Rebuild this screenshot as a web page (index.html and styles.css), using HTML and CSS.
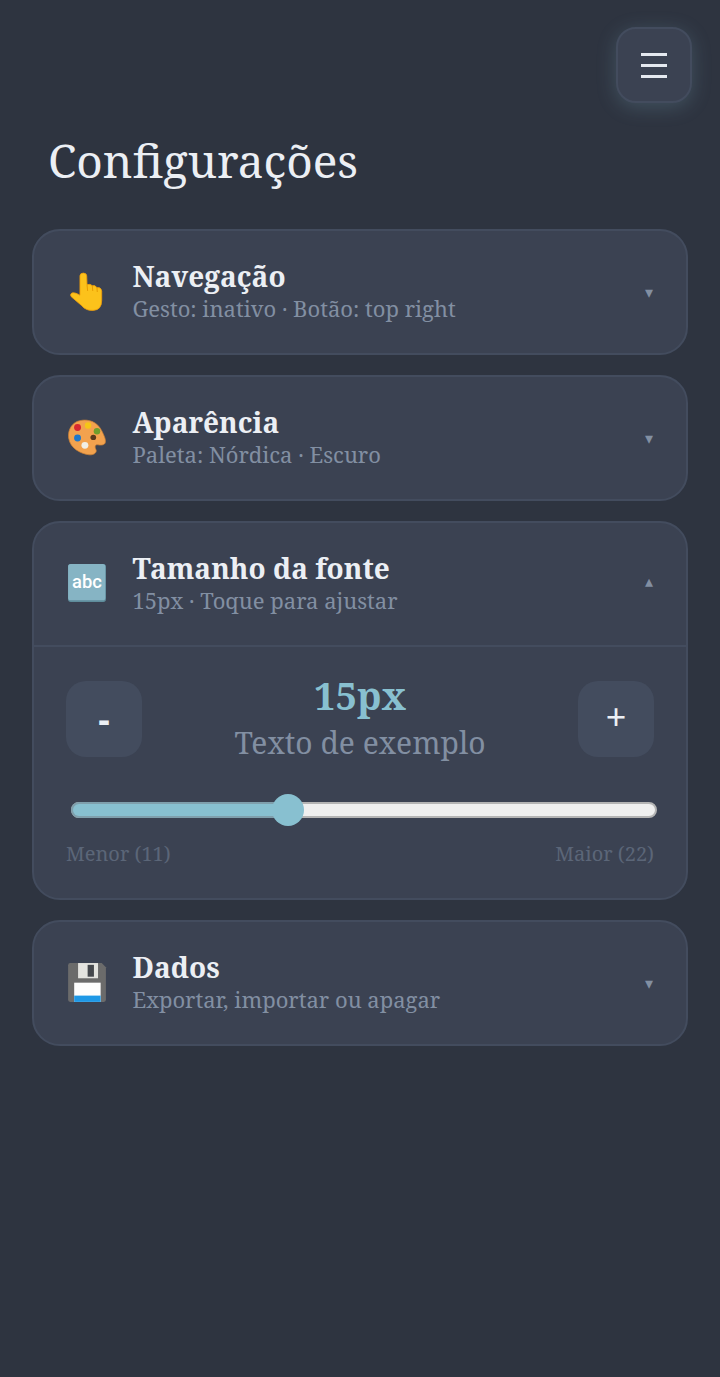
FILE: index.html
```html
<!DOCTYPE html>
<html lang="pt-BR">

<head>
  <meta charset="UTF-8">
  <meta name="viewport" content="width=device-width, initial-scale=1.0">
  <title>Configurações</title>
  <link rel="stylesheet" href="styles.css">
</head>

<body>

  <div class="topbar">
    <button class="menu-button" aria-label="Menu">
      <span class="menu-line"></span>
      <span class="menu-line"></span>
      <span class="menu-line"></span>
    </button>
  </div>

  <h1 class="page-title">Configurações</h1>

  <div class="card-list">

    <div class="card">
      <div class="card-header">
        <svg class="card-icon" viewBox="0 0 40 40">
          <path d="M13.300 4.500Q13.500 2 16.500 2Q19.500 2 19.700 4.500L20 13Q23 12 25 14Q28 13 29.500 16Q33 15 34 19L34 28Q34 37 26 37.500Q19 38 15 33L5 24.500Q3.500 22.500 5.500 21Q8 20 13.300 23Z" fill="#fcc21b" stroke="#ee9d0c" stroke-width="0.800"/>
          <path d="M20 13l.6 6M25 14l.5 5M29.500 16l.3 4" stroke="#e59900" stroke-width="0.900" fill="none"/>
        </svg>
        <div class="card-text">
          <h3>Navegação</h3>
          <p>Gesto: inativo · Botão: top right</p>
        </div>
        <span class="arrow">▾</span>
      </div>
    </div>

    <div class="card">
      <div class="card-header">
        <svg class="card-icon" viewBox="0 0 40 40">
          <path d="M13 3.500C22 1.500 30 5 34 13C36 17 38 21 37.500 24C37 27 33 27 30.500 26.500C28 26 27 28 28.500 31C30 34 26 36.500 22 36C14 35 4 30 2.500 20C1.500 12 6 5 13 3.500Z" fill="#f2a24e" stroke="#c97f35" stroke-width="0.700"/>
          <circle cx="11" cy="10" r="3.300" fill="#d7282f"/>
          <circle cx="21" cy="8" r="3.100" fill="#f5c518"/>
          <circle cx="29.500" cy="13.500" r="3.100" fill="#6f9f2c"/>
          <circle cx="11" cy="20" r="3.300" fill="#1f77c9"/>
          <ellipse cx="26" cy="19.500" rx="2.700" ry="2.500" fill="#5a3a1c"/>
          <circle cx="18" cy="27" r="3.300" fill="#f1efe6"/>
        </svg>
        <div class="card-text">
          <h3>Aparência</h3>
          <p>Paleta: Nórdica · Escuro</p>
        </div>
        <span class="arrow">▾</span>
      </div>
    </div>

    <div class="card">
      <div class="card-header card-header-open">
        <svg class="card-icon" viewBox="0 0 40 40">
          <rect x="2" y="2" width="36" height="36" rx="2.500" fill="#5f8d9c"/>
          <rect x="2" y="2" width="35.500" height="34.500" rx="2.500" fill="#86b4c4"/>
          <text x="20" y="24.500" class="abc-label">abc</text>
        </svg>
        <div class="card-text">
          <h3>Tamanho da fonte</h3>
          <p>15px · Toque para ajustar</p>
        </div>
        <span class="arrow arrow-open">▴</span>
      </div>
      <div class="card-body">
        <div class="size-row">
          <button class="step-button step-minus">-</button>
          <div class="size-preview">
            <div class="size-value">15px</div>
            <div class="size-sample">Texto de exemplo</div>
          </div>
          <button class="step-button step-plus">+</button>
        </div>
        <div class="slider">
          <div class="slider-fill" style="width: 37%"></div>
          <div class="slider-thumb"></div>
        </div>
        <div class="slider-labels">
          <span>Menor (11)</span>
          <span>Maior (22)</span>
        </div>
      </div>
    </div>

    <div class="card">
      <div class="card-header">
        <svg class="card-icon" viewBox="0 0 40 40">
          <path d="M4 1h30l4 4v31a2 2 0 0 1-2 2H4a2 2 0 0 1-2-2V3a2 2 0 0 1 2-2z" fill="#6b6b6b"/>
          <rect x="11.500" y="1" width="19" height="14.500" fill="#e4e4e0"/>
          <rect x="20.600" y="2.700" width="6" height="11.300" fill="#45484d"/>
          <rect x="7.800" y="19.700" width="25.200" height="18.300" fill="#fdfdfd"/>
          <rect x="7.800" y="32" width="25.200" height="6" fill="#1e98e6"/>
        </svg>
        <div class="card-text">
          <h3>Dados</h3>
          <p>Exportar, importar ou apagar</p>
        </div>
        <span class="arrow">▾</span>
      </div>
    </div>

  </div>

</body>

</html>
```

FILE: styles.css
```css
body {
  font-family: 'Noto Serif', 'DejaVu Serif', serif;
  margin: 0;
  padding: 0;
  min-height: 1377px;
  background-color: #2e3440;
  color: #eceff4;
}

.topbar {
  display: flex;
  justify-content: flex-end;
  padding: 27px 28px 0 0;
}

.menu-button {
  width: 76px;
  height: 76px;
  box-sizing: border-box;
  display: flex;
  flex-direction: column;
  align-items: center;
  justify-content: center;
  gap: 8px;
  padding: 0;
  background-color: #3b4252;
  border: 2px solid #434c5e;
  border-radius: 20px;
  box-shadow: 0 4px 20px rgba(136, 192, 208, 0.22);
}

.menu-line {
  display: block;
  width: 26px;
  height: 3px;
  background-color: #e5e9f0;
}

.page-title {
  margin: 25px 0 0 48px;
  font-size: 46px;
  line-height: 64px;
  font-weight: 400;
  color: #eceff4;
}

.card-list {
  display: flex;
  flex-direction: column;
  gap: 20px;
  padding: 0 32px;
  margin-top: 37px;
}

.card {
  background-color: #3b4252;
  border: 2px solid #434c5e;
  border-radius: 28px;
  overflow: hidden;
}

.card-header {
  display: flex;
  align-items: center;
  height: 122px;
  padding: 0 32px;
}

.card-header-open {
  box-sizing: border-box;
  height: 124px;
  padding-bottom: 2px;
  border-bottom: 2px solid #434c5e;
}

.card-icon {
  width: 42px;
  height: 42px;
  flex-shrink: 0;
  margin-right: 24.500px;
}

.abc-label {
  font-family: 'Roboto', sans-serif;
  font-size: 17.500px;
  font-weight: 500;
  fill: #fff;
  text-anchor: middle;
}

.card-text {
  flex: 1;
  margin-bottom: 2px;
}

.card-header-open .card-text {
  margin-bottom: 0;
}

.card-text h3 {
  margin: 0;
  font-size: 28px;
  line-height: 34px;
  font-weight: 700;
  color: #eceff4;
}

.card-text p {
  margin: 0;
  font-size: 22px;
  line-height: 30px;
  color: #828fa2;
}

.arrow {
  font-size: 16px;
  color: #828fa2;
  margin: 0 1px 0 -1px;
}

.arrow-open {
  margin-bottom: 4px;
}

.card-body {
  padding: 24px 32px 28px;
}

.size-row {
  display: flex;
  align-items: center;
  justify-content: space-between;
}

.step-button {
  width: 76px;
  height: 76px;
  padding: 0;
  background-color: #434c5e;
  border: none;
  border-radius: 20px;
  color: #eceff4;
  font-family: 'Noto Sans', sans-serif;
  font-size: 36px;
  font-weight: 400;
}

.step-minus {
  padding-bottom: 2px;
  font-weight: 700;
}

.step-plus {
  padding-bottom: 6px;
}

.size-preview {
  text-align: center;
}

.size-value {
  font-size: 38px;
  line-height: 48px;
  font-weight: 700;
  color: #88c0d0;
}

.size-sample {
  font-size: 30px;
  line-height: 48px;
  color: #828fa2;
}

.slider {
  position: relative;
  display: flex;
  height: 16px;
  margin: 35px 0 0 5px;
  width: 586px;
  box-sizing: border-box;
  background-color: #efefef;
  border: 2px solid #b4b4b4;
  border-radius: 8px;
}

.slider-fill {
  margin: -2px 0 -2px -2px;
  background-color: #88c0d0;
  border: 2px solid #7f9fac;
  border-right: none;
  border-radius: 8px 0 0 8px;
}

.slider-thumb {
  position: absolute;
  left: 199px;
  top: -10px;
  width: 32px;
  height: 32px;
  border-radius: 50%;
  background-color: #88c0d0;
}

.slider-labels {
  display: flex;
  justify-content: space-between;
  margin-top: 20px;
  font-size: 20px;
  line-height: 32px;
  color: #5b6678;
}
```
